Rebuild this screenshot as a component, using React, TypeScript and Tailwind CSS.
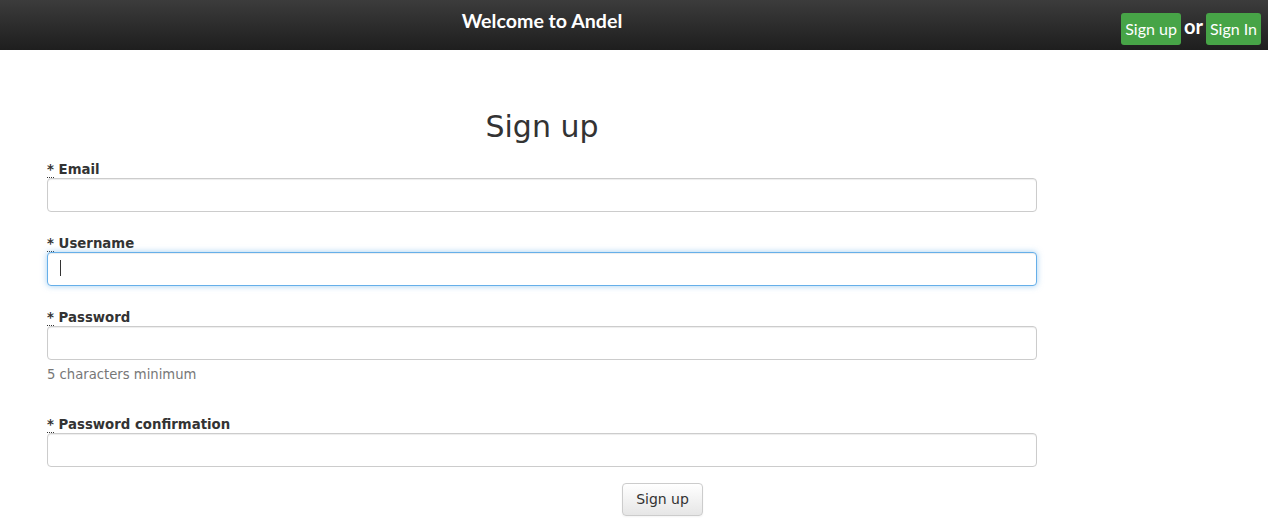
import React from "react";

const body = { fontFamily: '"DejaVu Sans", Verdana, sans-serif' };
const lato = { fontFamily: 'Lato, "Liberation Sans", sans-serif' };

function Field({
  label,
  focused,
  hint,
}: {
  label: string;
  focused?: boolean;
  hint?: string;
}) {
  return (
    <div className={hint ? "" : "mb-[22px]"}>
      <label className="block pt-[1px] text-[13.3px] leading-[17px] font-bold text-[#333]">
        <abbr
          title="required"
          className="no-underline border-b border-dotted border-[#333]"
        >
          *
        </abbr>{" "}
        {label}
      </label>
      <div className="relative">
        <input
          className={
            "block w-full h-[34px] rounded-[4px] border bg-white px-3 outline-none " +
            (focused
              ? "border-[#66afe9] shadow-[inset_0_1px_1px_rgba(0,0,0,0.075),0_0_6px_rgba(102,175,233,0.6)]"
              : "border-[#ccc] shadow-[inset_0_1px_1px_rgba(0,0,0,0.075)]")
          }
        />
        {focused && (
          <span className="absolute left-[13px] top-[8px] h-[16px] w-px bg-[#333]" />
        )}
      </div>
      {hint && (
        <p className="mt-[6px] mb-[31px] text-[13.2px] leading-[18px] text-[#777]">
          {hint}
        </p>
      )}
    </div>
  );
}

export default function App() {
  return (
    <div className="min-h-[528px] bg-white" style={body}>
      {/* Navbar */}
      <div className="flex h-[50px] bg-gradient-to-b from-[#3c3c3c] to-[#1e1e1e]" style={lato}>
        <div className="w-[1037px] pl-[47px] pt-[7px] text-center">
          <span className="text-[19.6px] leading-[28px] font-bold text-white">
            Welcome to Andel
          </span>
        </div>
        <div className="ml-auto flex items-start gap-[3px] pr-[7px] pt-[13px]">
          <button className="h-[32px] w-[60px] rounded-[3px] bg-[#47a447] text-[16px] text-white">
            Sign up
          </button>
          <span className="mt-[-1px] text-[20px] leading-[28px] font-bold text-white">or</span>
          <button className="h-[32px] w-[55px] rounded-[3px] bg-[#47a447] text-[16px] text-white">
            Sign In
          </button>
        </div>
      </div>

      {/* Form */}
      <div className="ml-[47px] w-[990px]">
        <h2 className="mt-[60px] mb-[17px] text-center text-[30px] leading-[33px] font-normal text-[#333]">
          Sign up
        </h2>
        <Field label="Email" />
        <Field label="Username" focused />
        <Field label="Password" hint="5 characters minimum" />
        <Field label="Password confirmation" />
        <div className="-mt-[6px] ml-[575px]">
          <button className="h-[33px] w-[81px] rounded-[4px] border border-[#ccc] bg-gradient-to-b from-white to-[#e6e6e6] text-[14px] text-[#333] shadow-[0_1px_2px_rgba(0,0,0,0.05)]">
            Sign up
          </button>
        </div>
      </div>
    </div>
  );
}
